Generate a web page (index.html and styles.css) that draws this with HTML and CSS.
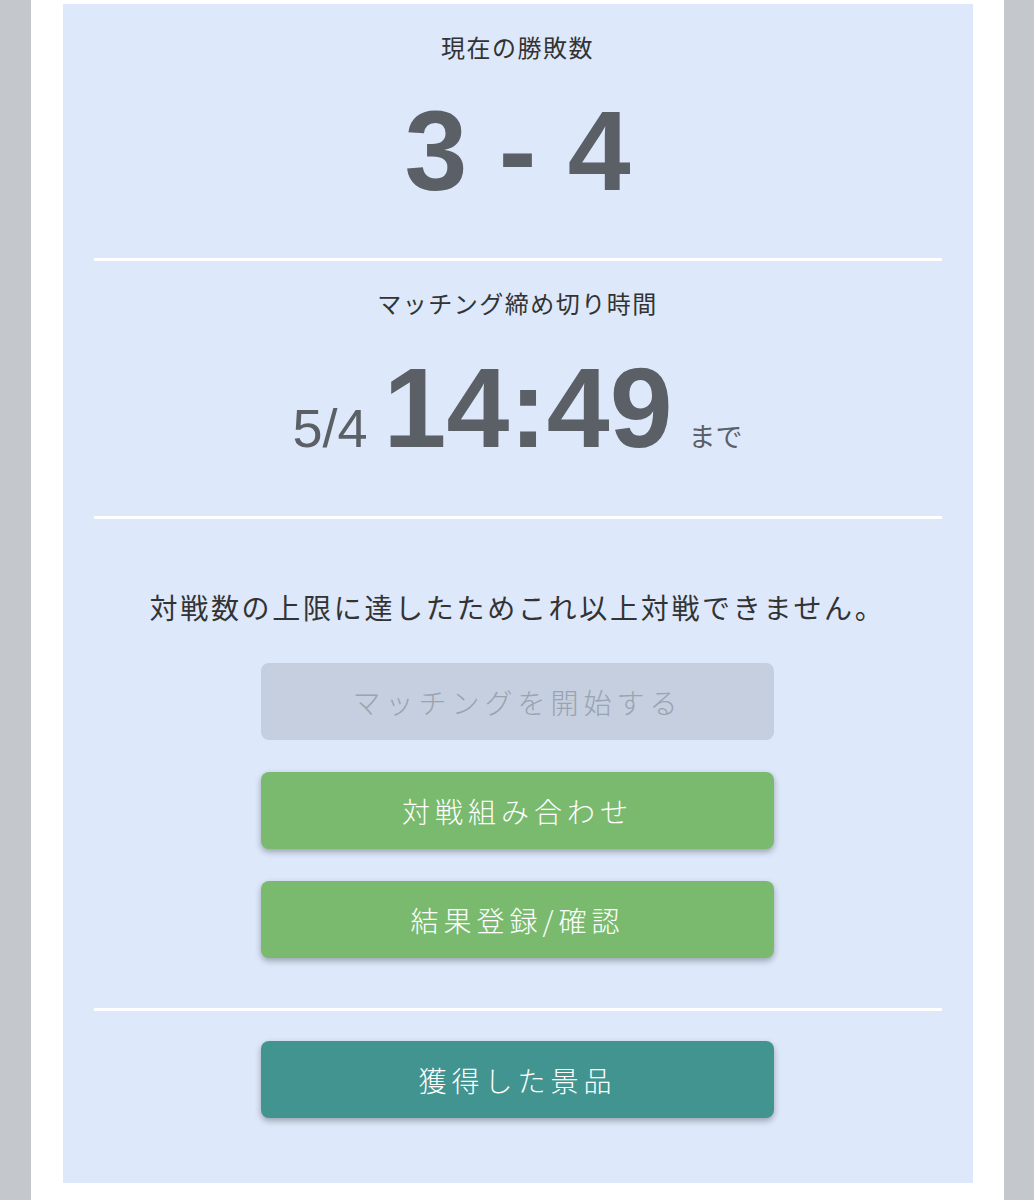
FILE: index.html
```html
<!DOCTYPE html>
<html lang="ja">
<head>
    <meta charset="UTF-8">
    <meta name="viewport" content="width=device-width, initial-scale=1.0">
    <title>マッチング</title>
    <link rel="stylesheet" href="styles.css">
</head>
<body>
    <div class="page">
        <div class="panel">
            <div class="section score-section">
                <div class="label">現在の勝敗数</div>
                <div class="score">3 - 4</div>
            </div>
            <hr class="divider">
            <div class="section deadline-section">
                <div class="label">マッチング締め切り時間</div>
                <div class="deadline">
                    <span class="date">5/4</span>
                    <span class="time">14:49</span>
                    <span class="until">まで</span>
                </div>
            </div>
            <hr class="divider">
            <div class="section actions">
                <p class="notice">対戦数の上限に達したためこれ以上対戦できません。</p>
                <button class="btn btn-disabled" disabled>マッチングを開始する</button>
                <button class="btn btn-green">対戦組み合わせ</button>
                <button class="btn btn-green">結果登録/確認</button>
            </div>
            <hr class="divider">
            <div class="section prizes">
                <button class="btn btn-teal">獲得した景品</button>
            </div>
        </div>
    </div>
</body>
</html>
```

FILE: styles.css
```css
html, body {
    margin: 0;
    padding: 0;
}

body {
    background-color: #c4c7cc;
    font-family: "Noto Sans CJK JP", "Noto Sans", sans-serif;
    color: #333333;
}

.page {
    width: 910px;
    min-height: 1196px;
    margin: 0 auto;
    padding: 4px 31px 0 32px;
    background-color: #ffffff;
}

.panel {
    background-color: #dde8fb;
    padding: 0 31px 65px;
}

.section {
    display: flex;
    flex-direction: column;
    align-items: center;
}

.label {
    font-size: 24px;
    line-height: 30px;
    letter-spacing: 1.5px;
    color: #333333;
}

.score-section {
    padding-top: 28px;
}

.score {
    font-family: "Liberation Sans", Arial, sans-serif;
    font-weight: bold;
    font-size: 113px;
    line-height: 113px;
    color: #5b5f66;
    margin-top: 33px;
    margin-bottom: 50px;
}

.divider {
    border: none;
    height: 3px;
    background-color: #ffffff;
    margin: 0;
}

.deadline-section {
    padding-top: 27px;
}

.deadline {
    display: flex;
    align-items: baseline;
    gap: 16px;
    margin-top: 34px;
    margin-bottom: 51px;
    color: #5b5f66;
    font-family: "Liberation Sans", Arial, sans-serif;
}

.date {
    font-size: 54px;
    line-height: 1;
}

.time {
    font-weight: bold;
    font-size: 113px;
    line-height: 113px;
}

.until {
    font-family: "Noto Sans CJK JP", sans-serif;
    font-size: 27px;
    line-height: 1;
}

.actions {
    padding-top: 70px;
    padding-bottom: 50px;
    gap: 32px;
}

.notice {
    margin: 0 0 6px;
    font-size: 28px;
    line-height: 36px;
    letter-spacing: 2.7px;
    color: #333333;
}

.btn {
    width: 513px;
    height: 77px;
    border: none;
    border-radius: 8px;
    font-family: "Noto Sans CJK JP", sans-serif;
    font-size: 28px;
    font-weight: 300;
    letter-spacing: 5px;
    color: #ffffff;
    cursor: pointer;
}

.btn-disabled {
    background-color: #c5cfdf;
    color: #9aa3b0;
    cursor: default;
}

.btn-green {
    background-color: #7aba6f;
    box-shadow: 0 3px 6px rgba(0, 0, 0, 0.3);
}

.btn-teal {
    background-color: #429491;
    box-shadow: 0 3px 6px rgba(0, 0, 0, 0.3);
}

.prizes {
    padding-top: 30px;
}
```
